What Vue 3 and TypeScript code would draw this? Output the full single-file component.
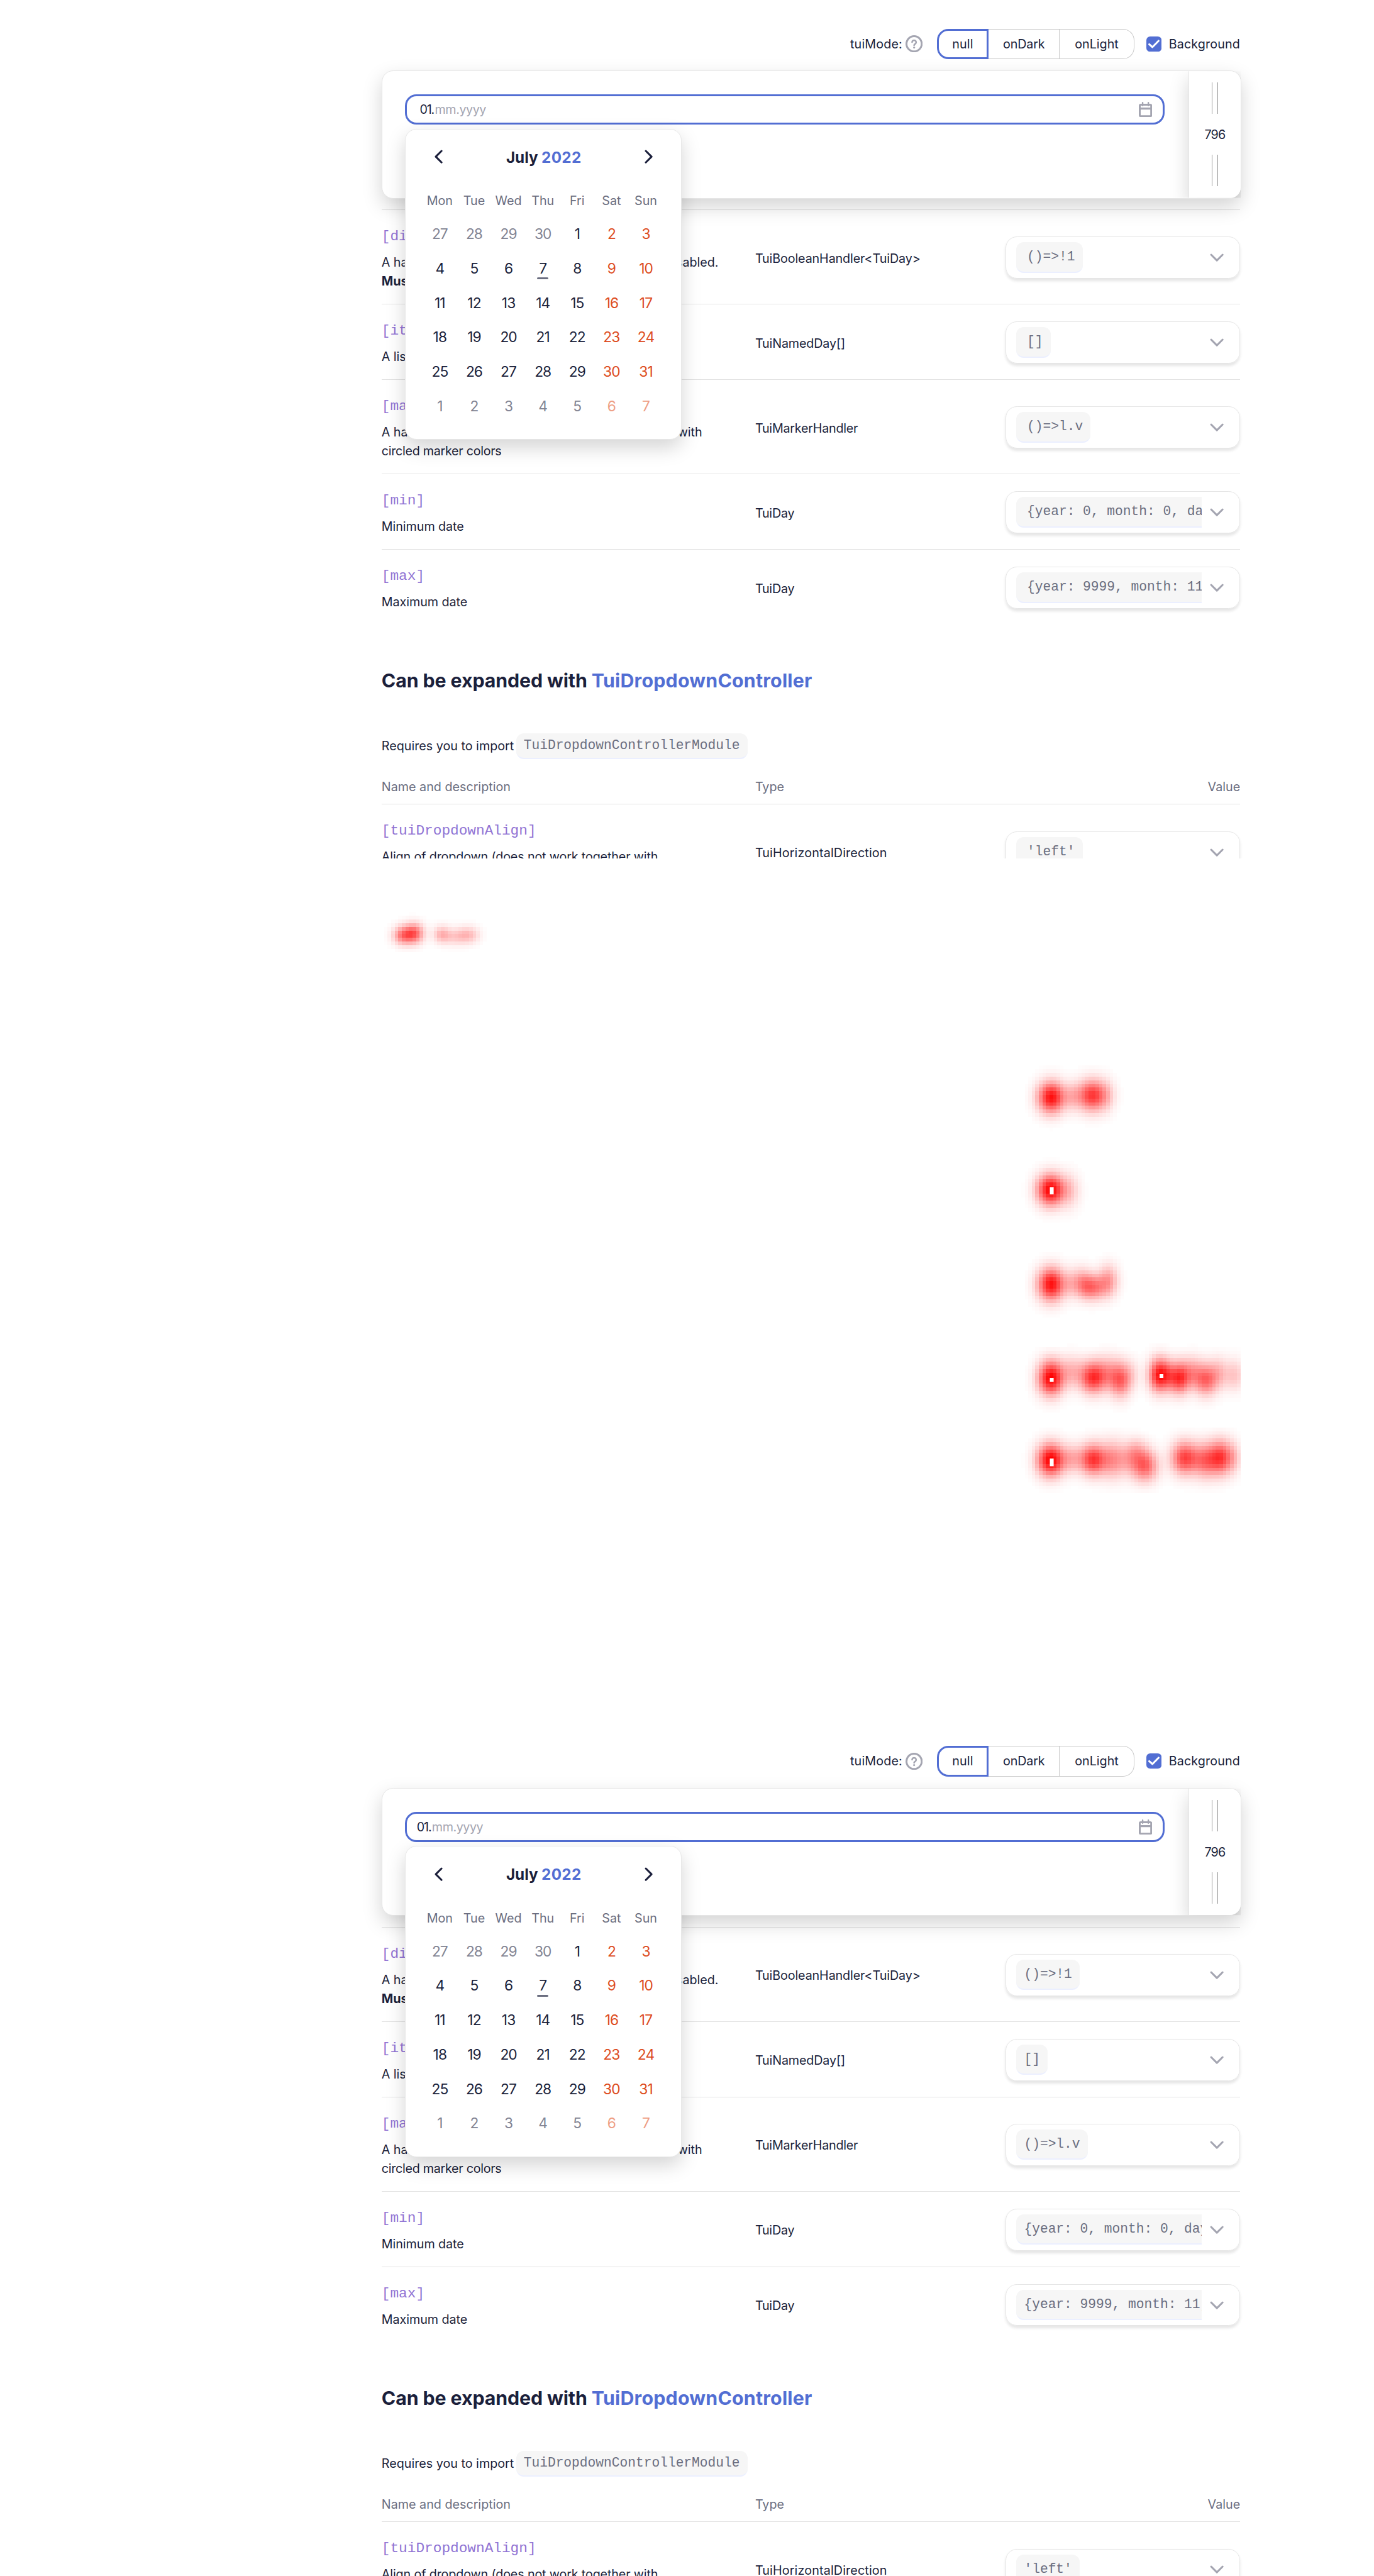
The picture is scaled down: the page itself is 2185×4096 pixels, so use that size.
<script setup lang="ts">
interface Shot {
  id: string
  shifted: boolean
}

interface ApiRow {
  name: string
  desc: string[]
  strong?: string
  type: string
  typeSpacing: number
  value: string
  height: number
}

/** A soft spot: centre x, centre y, spread x, spread y, strength */
type Spot = [number, number, number, number, number]

interface Cell {
  key: string
  x: number
  y: number
  alpha: number
}

const before: Shot = { id: 'before', shifted: true }
const after: Shot = { id: 'after', shifted: false }

const weekdays = ['Mon', 'Tue', 'Wed', 'Thu', 'Fri', 'Sat', 'Sun']

const days = Array.from({ length: 42 }, (_, i) => {
  const n = i - 3
  const out = n < 1 || n > 31
  const value = n < 1 ? 30 + n : n > 31 ? n - 31 : n
  return { key: i, value, out, weekend: i % 7 > 4, today: n === 7 }
})

const rows: ApiRow[] = [
  {
    name: '[disabledItemHandler]',
    desc: ['A handler that gets date and returns true if it', 'is disabled.'],
    strong: 'Must be a pure function',
    type: 'TuiBooleanHandler<TuiDay>',
    typeSpacing: -0.08,
    value: '()=>!1',
    height: 99,
  },
  {
    name: '[items]',
    desc: ['A list of named dates'],
    type: 'TuiNamedDay[]',
    typeSpacing: -0.09,
    value: '[]',
    height: 79,
  },
  {
    name: '[markerHandler]',
    desc: ['A handler that gets date and returns color', 'with'],
    type: 'TuiMarkerHandler',
    typeSpacing: -0.15,
    value: '()=>l.v',
    height: 99,
  },
  {
    name: '[min]',
    desc: ['Minimum date'],
    type: 'TuiDay',
    typeSpacing: -0.15,
    value: '{year: 0, month: 0, day: 1}',
    height: 79,
  },
  {
    name: '[max]',
    desc: ['Maximum date'],
    type: 'TuiDay',
    typeSpacing: -0.15,
    value: '{year: 9999, month: 11, day: 31}',
    height: 79,
  },
]

const dropdownRows: ApiRow[] = [
  {
    name: '[tuiDropdownAlign]',
    desc: ['Align of dropdown (does not work together with'],
    type: 'TuiHorizontalDirection',
    typeSpacing: 0.09,
    value: "'left'",
    height: 100,
  },
]

const sections = [
  { id: 'main', rows },
  { id: 'dropdown', rows: dropdownRows },
]

const spots: Spot[] = [
  [868, 1957, 14, 14, 0.6],
  [845, 1961, 14, 13, 0.5],
  [926, 1959, 12, 12, 0.28],
  [981, 1960, 16, 12, 0.25],
  [953, 1964, 18, 12, 0.17],

  [2204, 2301, 19, 22, 0.94],
  [2290, 2297, 20, 22, 0.78],
  [2249, 2299, 15, 19, 0.22],
  [2320, 2297, 13, 22, 0.14],

  [2202.6, 2495, 19, 22, 1],
  [2242, 2497, 15, 24, 0.2],

  [2204, 2693, 19, 23, 0.94],
  [2289, 2699, 21, 18, 0.56],
  [2265, 2686, 16, 20, 0.26],
  [2324, 2684, 14, 22, 0.34],
  [2240, 2692, 10, 18, 0.1],

  [2203.3, 2889, 18, 24, 1],
  [2248, 2876, 18, 22, 0.26],
  [2291, 2888, 18, 22, 0.78],
  [2322, 2879, 18, 24, 0.3],
  [2349, 2893, 15, 24, 0.58],
  [2372, 2880, 12, 20, 0.12],
  [2431, 2883, 15, 23, 0.94],
  [2450, 2882, 10, 20, 0.14],
  [2472, 2889, 15, 22, 0.78],
  [2500, 2878, 16, 22, 0.32],
  [2528, 2893, 16, 22, 0.56],
  [2554, 2879, 14, 22, 0.24],
  [2588, 2883, 15, 22, 0.22],

  [2202.6, 3061, 19, 23, 1],
  [2248, 3058, 18, 20, 0.28],
  [2292, 3060, 18, 22, 0.78],
  [2334, 3060, 18, 26, 0.42],
  [2366, 3062, 14, 20, 0.16],
  [2399, 3073, 19, 22, 0.62],
  [2382, 3042, 16, 18, 0.25],
  [2484, 3057, 19, 23, 0.74],
  [2527, 3062, 17, 24, 0.52],
  [2560, 3056, 17, 24, 0.74],
  [2588, 3056, 11, 22, 0.14],
]

const holes: Array<[number, number, number, number]> = [
  [2201, 2489, 8, 15.2],
  [2201, 2889, 8, 8],
  [2431, 2881, 8, 8],
  [2201, 3058, 8, 16],
]

const stepX = 7.42
const stepY = 7.66

function buildCells(): Cell[] {
  const list: Cell[] = []
  for (let r = 0; r < 160; r++) {
    const y = 1905 + r * stepY
    const near = spots.filter((s) => Math.abs(s[1] - y) < 70)
    if (!near.length) continue
    for (let c = 0; c < 246; c++) {
      const x = 790.5 + c * stepX
      if (x > 2597) break
      let alpha = 0
      for (const [cx, cy, sx, sy, amp] of near) {
        const dx = (x + stepX / 2 - cx) / sx
        const dy = (y + stepY / 2 - cy) / sy
        alpha += amp * Math.exp(-(dx * dx + dy * dy) / 2)
      }
      if (alpha > 0.008) {
        list.push({ key: `${r}-${c}`, x, y, alpha: Math.min(1, alpha) })
      }
    }
  }
  return list
}

const cells = buildCells()
</script>

<template>
  <div class="page">
    <template v-for="(shot, index) in [before, after]" :key="shot.id">
      <section class="shot" :class="{ shifted: shot.shifted }">
        <div class="controls">
          <span class="mode">tuiMode:</span>
          <svg class="hint" viewBox="0 0 18 18">
            <circle cx="9" cy="9" r="8" fill="none" stroke="#a4a5b1" stroke-width="2" />
            <path
              d="M6.9 7.3a2.1 2.1 0 1 1 3.3 1.8c-.8.5-1.2.7-1.2 1.5"
              fill="none"
              stroke="#a4a5b1"
              stroke-width="1.7"
              stroke-linecap="round"
            />
            <circle cx="9" cy="12.9" r="1.05" fill="#a4a5b1" />
          </svg>
          <div class="segments">
            <span class="segment active">null</span>
            <span class="segment dark">onDark</span>
            <span class="segment light">onLight</span>
          </div>
          <svg class="checkbox" viewBox="0 0 16 16">
            <rect width="16" height="16" rx="4" fill="#526ed3" />
            <path
              d="M3 8.2l3.3 3L12.8 4.6"
              fill="none"
              stroke="#fff"
              stroke-width="2"
              stroke-linecap="round"
              stroke-linejoin="round"
            />
          </svg>
          <span class="background">Background</span>
        </div>

        <div class="card">
          <div class="stage">
            <div class="input">
              <span class="typed">01.</span><span class="mask">mm.yyyy</span>
              <svg class="date-icon" viewBox="0 0 14 16">
                <rect x="1" y="3" width="12" height="12" rx="1" fill="none" stroke="#a4a5b1" stroke-width="2" />
                <path d="M1 7h12" stroke="#a4a5b1" stroke-width="2" />
                <path d="M4 .8v3M10 .8v3" stroke="#a4a5b1" stroke-width="1.6" stroke-linecap="round" />
              </svg>
            </div>
          </div>
          <div class="resizer">
            <i class="grip"></i>
            <span>796</span>
            <i class="grip"></i>
          </div>

          <div class="calendar">
            <div class="month">
              <svg class="arrow" viewBox="0 0 10 16">
                <path d="M8 2L2 8l6 6" />
              </svg>
              <div class="title"><b>July</b><b class="year">2022</b></div>
              <svg class="arrow" viewBox="0 0 10 16">
                <path d="M2 2l6 6-6 6" />
              </svg>
            </div>
            <div class="weekdays">
              <span v-for="d in weekdays" :key="d">{{ d }}</span>
            </div>
            <div class="days">
              <span
                v-for="d in days"
                :key="d.key"
                :class="{ out: d.out, weekend: d.weekend, today: d.today }"
              >{{ d.value }}</span>
            </div>
          </div>
        </div>

        <div v-for="section in sections" :key="section.id" class="section">
          <template v-if="section.id === 'dropdown'">
            <h2>Can be expanded with <span>TuiDropdownController</span></h2>
            <p class="requires">Requires you to import <code class="chip">TuiDropdownControllerModule</code></p>
            <div class="head">
              <span class="col-name">Name and description</span>
              <span>Type</span>
              <span class="col-value">Value</span>
            </div>
          </template>
          <div v-for="row in section.rows" :key="row.name" class="row" :style="{ height: row.height + 'px' }">
            <div class="col-name">
              <code class="name">{{ row.name }}</code>
              <div class="desc" :class="{ spread: row.desc.length > 1, wide: !!row.strong, long: section.id === 'dropdown' }">
                <span v-for="part in row.desc" :key="part">{{ part }}</span>
              </div>
              <strong v-if="row.strong">{{ row.strong }}</strong>
              <div v-else-if="row.name === '[markerHandler]'" class="desc tail">circled marker colors</div>
            </div>
            <span class="type" :style="{ letterSpacing: row.typeSpacing + 'px' }">{{ row.type }}</span>
            <div class="select">
              <div class="value"><code class="chip">{{ row.value }}</code></div>
              <svg class="chevron" viewBox="0 0 16 10">
                <path d="M2 2l6 6 6-6" />
              </svg>
            </div>
          </div>
        </div>
      </section>

      <svg v-if="index === 0" class="heat" viewBox="0 1800 2880 1800" preserveAspectRatio="none">
        <rect
          v-for="cell in cells"
          :key="cell.key"
          :x="cell.x"
          :y="cell.y"
          :width="stepX"
          :height="stepY"
          :fill-opacity="cell.alpha"
          fill="#f00"
          shape-rendering="crispEdges"
        />
        <rect
          v-for="(h, i) in holes"
          :key="i"
          :x="h[0]"
          :y="h[1]"
          :width="h[2]"
          :height="h[3]"
          fill="#fff"
        />
      </svg>
    </template>
  </div>
</template>

<style>
html,
body {
  margin: 0;
  background: #fff;
  overflow: hidden;
}
</style>

<style scoped>
.page {
  width: 1440.4px;
  height: 2700px;
  zoom: 1.51704;
  background: #fff;
  color: #1b1f3b;
  font: 400 13px/20px Inter, sans-serif;
  overflow: hidden;
}

.page * {
  box-sizing: border-box;
}

.shot {
  position: relative;
  height: 900px;
  padding: 30px 0 0 400px;
  overflow: hidden;
}

.heat {
  display: block;
  width: 1440px;
  height: 900px;
}

.controls {
  display: flex;
  align-items: center;
  height: 32px;
  padding-left: 491.2px;
}

.mode {
  width: 57.9px;
  letter-spacing: 0.1px;
}

.hint {
  width: 18px;
  height: 18px;
  margin-right: 15px;
}

.segments {
  display: flex;
  width: 206.8px;
  height: 32px;
  margin-right: 12.6px;
}

.segment {
  display: flex;
  align-items: center;
  justify-content: center;
  border: 1px solid #c9c9c9;
  border-left: 0;
}

.segment.active {
  width: 54.2px;
  border: 2px solid #526ed3;
  border-radius: 12px 0 0 12px;
  letter-spacing: 0.09px;
}

.segment.dark {
  width: 74.7px;
  letter-spacing: -0.09px;
}

.segment.light {
  width: 77.9px;
  border-radius: 0 12px 12px 0;
}

.checkbox {
  width: 16px;
  height: 16px;
  margin-right: 7.8px;
}

.background {
  letter-spacing: 0.08px;
}

.card {
  position: relative;
  z-index: 1;
  display: flex;
  width: 901px;
  height: 134px;
  margin: 12px 0 11.5px 0.3px;
  background: #fff;
  border: 1px solid #e6e6e6;
  border-radius: 12px;
  box-shadow: 0 8px 20px rgba(0, 0, 0, 0.17);
}

.stage {
  flex: 1;
  padding: 24.2px 0 0 23.7px;
  overflow: hidden;
  border-radius: 12px 0 0 12px;
}

.input {
  display: flex;
  align-items: center;
  width: 796px;
  height: 32px;
  padding: 0 11px 0 10.3px;
  border: 2px solid #526ed3;
  border-radius: 12px;
}

.shifted .input {
  padding-left: 13.4px;
}

.typed {
  width: 15.8px;
  letter-spacing: -0.8px;
  white-space: nowrap;
}

.mask {
  flex: 1;
  color: #a4a5b1;
  letter-spacing: -0.3px;
}

.date-icon {
  width: 14px;
  height: 16px;
}

.resizer {
  display: flex;
  flex-direction: column;
  align-items: center;
  justify-content: space-between;
  width: 55px;
  padding: 12px 0;
  background: #fff;
  border-left: 1px solid #e6e6e6;
  border-radius: 0 11px 11px 0;
  letter-spacing: -0.6px;
  box-shadow: 0 8px 20px rgba(0, 0, 0, 0.17);
  clip-path: inset(0 0 0 -30px);
}

.resizer span {
  padding-top: 0.8px;
}

.grip {
  width: 6.4px;
  height: 33px;
  border: solid #959595;
  border-width: 0 1px;
}

.calendar {
  position: absolute;
  top: 60.2px;
  left: 23.7px;
  width: 290px;
  height: 326px;
  padding: 0 17.7px;
  background: #fff;
  border: 1px solid #e8e8e8;
  border-radius: 12px;
  box-shadow: 0 8px 20px rgba(0, 0, 0, 0.17);
}

.month {
  display: flex;
  align-items: center;
  justify-content: space-between;
  height: 57.6px;
  padding: 0 11.4px 0 11.6px;
}

.arrow {
  width: 10px;
  height: 16px;
  fill: none;
  stroke: #1b1f3b;
  stroke-width: 2;
  stroke-linecap: round;
  stroke-linejoin: round;
}

.title {
  display: flex;
  gap: 3.6px;
  padding: 0.6px 0 0 0.5px;
  font-size: 16px;
}

.year {
  color: #526ed3;
  letter-spacing: 0.2px;
}

.weekdays {
  display: grid;
  grid-template-columns: repeat(7, 36px);
  height: 34.4px;
  line-height: 35.4px;
  text-align: center;
  color: #6b6e80;
}

.days {
  display: grid;
  grid-template-columns: repeat(7, 36px);
  grid-auto-rows: 36.06px;
  font-size: 15px;
  line-height: 36.2px;
  letter-spacing: -0.6px;
  text-align: center;
}

.days .weekend {
  color: #dd4c1e;
}

.days .out {
  color: #828493;
}

.days .weekend.out {
  color: #ee9e84;
}

.today {
  position: relative;
}

.today::after {
  content: '';
  position: absolute;
  left: 12px;
  bottom: 7px;
  width: 12px;
  height: 2px;
  border-radius: 1px;
  background: #6b6e80;
}

.section {
  width: 900px;
}

.row {
  display: flex;
  align-items: center;
  border-top: 1px solid #e2e2e2;
}

.col-name {
  width: 391.6px;
}

.row .col-name {
  align-self: flex-start;
  padding-top: 15.8px;
  white-space: nowrap;
}

.name {
  display: block;
  margin-bottom: 5px;
  font: 15px/24px 'Liberation Mono', monospace;
  color: #9073d4;
}

.desc {
  width: 336px;
  letter-spacing: -0.04px;
}

.desc.spread {
  display: flex;
  justify-content: space-between;
}

.desc.wide {
  width: 353px;
}

.desc.long {
  letter-spacing: -0.09px;
}

.desc.tail {
  letter-spacing: -0.19px;
}

strong {
  display: block;
  font-weight: 700;
}

.type {
  width: 262.2px;
  padding-top: 3px;
}

.select {
  display: flex;
  align-items: center;
  justify-content: space-between;
  width: 245.8px;
  height: 44px;
  margin-top: 1.4px;
  padding: 0 15.5px 0 11px;
  border: 1px solid #e6e6e6;
  border-radius: 12px;
  box-shadow: 0 2px 3px rgba(0, 0, 0, 0.1);
}

.value {
  width: 194px;
  overflow: hidden;
}

.chip {
  display: inline-block;
  vertical-align: top;
  padding: 0 8px;
  font: 14px/30.4px 'Liberation Mono', monospace;
  color: #6b6e80;
  white-space: pre;
  background: #f6f6f6;
  border-bottom: 1.6px solid #ebefff;
  border-radius: 8px;
}

.value .chip {
  padding-top: 0.6px;
  line-height: 29.9px;
}

.shifted .value .chip {
  padding-left: 11px;
}

.chevron {
  width: 16px;
  height: 10px;
  fill: none;
  stroke: #a4a5b1;
  stroke-width: 2;
  stroke-linecap: round;
  stroke-linejoin: round;
}

h2 {
  margin: 45px 0 41.2px;
  font-size: 20px;
  font-weight: 700;
  line-height: 28px;
  letter-spacing: -0.07px;
}

h2 span {
  color: #526ed3;
  letter-spacing: 0.14px;
}

.requires {
  display: flex;
  gap: 2.2px;
  margin: 0;
  height: 27.3px;
  line-height: 26.4px;
}

.requires .chip {
  line-height: 25.8px;
}

.head {
  display: flex;
  height: 46.5px;
  padding-top: 18.7px;
  color: #6b6e80;
}

.head .col-value {
  margin-left: auto;
}
</style>
